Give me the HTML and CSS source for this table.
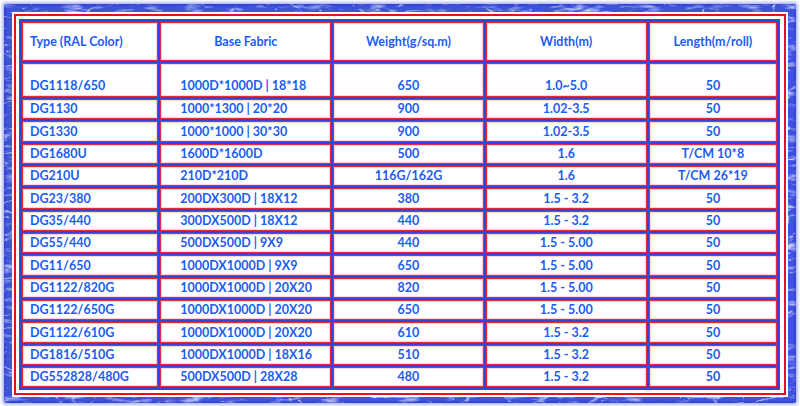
FILE: index.html
```html
<!DOCTYPE html>
<html>
<head>
<meta charset="utf-8">
<link rel="stylesheet" href="styles.css">
</head>
<body>
<div class="page">
  <div class="frame">
    <div class="paper">
      <div class="box">
        <table class="spec">
          <colgroup>
            <col class="c1"><col class="c2"><col class="c3"><col class="c4"><col class="c5">
          </colgroup>
          <thead>
            <tr class="head">
              <th class="left">Type (RAL Color)</th>
              <th>Base Fabric</th>
              <th>Weight(g/sq.m)</th>
              <th>Width(m)</th>
              <th>Length(m/roll)</th>
            </tr>
          </thead>
          <tbody>
            <tr class="first"><td class="left">DG1118/650</td><td class="fab">1000D*1000D | 18*18</td><td>650</td><td>1.0~5.0</td><td>50</td></tr>
            <tr><td class="left">DG1130</td><td class="fab">1000*1300 | 20*20</td><td>900</td><td>1.02-3.5</td><td>50</td></tr>
            <tr><td class="left">DG1330</td><td class="fab">1000*1000 | 30*30</td><td>900</td><td>1.02-3.5</td><td>50</td></tr>
            <tr><td class="left">DG1680U</td><td class="fab">1600D*1600D</td><td>500</td><td>1.6</td><td>T/CM 10*8</td></tr>
            <tr><td class="left">DG210U</td><td class="fab">210D*210D</td><td>116G/162G</td><td>1.6</td><td>T/CM 26*19</td></tr>
            <tr><td class="left">DG23/380</td><td class="fab">200DX300D | 18X12</td><td>380</td><td>1.5 - 3.2</td><td>50</td></tr>
            <tr><td class="left">DG35/440</td><td class="fab">300DX500D | 18X12</td><td>440</td><td>1.5 - 3.2</td><td>50</td></tr>
            <tr><td class="left">DG55/440</td><td class="fab">500DX500D | 9X9</td><td>440</td><td>1.5 - 5.00</td><td>50</td></tr>
            <tr><td class="left">DG11/650</td><td class="fab">1000DX1000D | 9X9</td><td>650</td><td>1.5 - 5.00</td><td>50</td></tr>
            <tr><td class="left">DG1122/820G</td><td class="fab">1000DX1000D | 20X20</td><td>820</td><td>1.5 - 5.00</td><td>50</td></tr>
            <tr><td class="left">DG1122/650G</td><td class="fab">1000DX1000D | 20X20</td><td>650</td><td>1.5 - 5.00</td><td>50</td></tr>
            <tr><td class="left">DG1122/610G</td><td class="fab">1000DX1000D | 20X20</td><td>610</td><td>1.5 - 3.2</td><td>50</td></tr>
            <tr><td class="left">DG1816/510G</td><td class="fab">1000DX1000D | 18X16</td><td>510</td><td>1.5 - 3.2</td><td>50</td></tr>
            <tr><td class="left">DG552828/480G</td><td class="fab">500DX500D | 28X28</td><td>480</td><td>1.5 - 3.2</td><td>50</td></tr>
          </tbody>
        </table>
      </div>
    </div>
  </div>
</div>
</body>
</html>
```
FILE: styles.css
```css
* { box-sizing: border-box; }
html, body { margin: 0; padding: 0; background: #ffffff; }
body { width: 800px; height: 406px; overflow: hidden; }

.page { padding: 4px 4px 3px 4px; }

.frame {
  padding: 8px 8px 6px 8px;
  background-color: #3f52dc;
  background-image:
    url("data:image/svg+xml,%3Csvg xmlns='http://www.w3.org/2000/svg' width='800' height='420'%3E%3Cfilter id='c' x='0' y='0' width='100%25' height='100%25'%3E%3CfeTurbulence type='turbulence' baseFrequency='0.035 0.08' numOctaves='2' seed='11'/%3E%3CfeColorMatrix values='0 0 0 0 0.85 0 0 0 0 0.88 0 0 0 0 1 -7 0 0 0 0.75'/%3E%3C/filter%3E%3Cfilter id='m' x='0' y='0' width='100%25' height='100%25'%3E%3CfeTurbulence type='fractalNoise' baseFrequency='0.05 0.2' numOctaves='3' seed='4'/%3E%3CfeColorMatrix values='0 0 0 0 0.75 0 0 0 0 0.8 0 0 0 0 1 2.2 0 0 0 -1.15'/%3E%3C/filter%3E%3Crect width='100%25' height='100%25' filter='url(%23m)'/%3E%3Crect width='100%25' height='100%25' filter='url(%23c)'/%3E%3C/svg%3E");
  box-shadow: 0 0 3px 2px rgba(100, 120, 235, 0.5), inset 0 0 2px 1px rgba(30, 40, 190, 0.55);
  border-radius: 2px;
}

.paper {
  background: #ffffff;
  padding: 2px;
}

.box {
  border: 2px solid #e3102b;
  padding: 3px;
  background: #ffffff;
}

.spec {
  width: 761px;
  table-layout: fixed;
  border-collapse: separate;
  border-spacing: 2px;
  border: 1px solid #e3102b;
  background: #2d46e0;
  font-family: "Lato", "Open Sans", sans-serif;
  font-weight: 700;
  font-size: 12.5px;
  color: #1c5cf2;
}

.c1 { width: 136px; }
.c2 { width: 171px; }
.c3 { width: 150px; }
.c4 { width: 161px; }
.c5 { width: 128px; }

.spec th, .spec td {
  background: #ffffff;
  border: 1px solid #e8283d;
  box-shadow: inset 0 0 0 1px #fbd3d8;
  padding: 0 4px;
  height: 20px;
  text-align: center;
  vertical-align: middle;
  line-height: 14px;
  white-space: nowrap;
  font-weight: 700;
}

.spec tbody tr:nth-child(3n) td { height: 21px; }
.spec .head th { height: 39px; }
.spec .first td { height: 34px; vertical-align: bottom; padding-bottom: 3px; }

.spec .left { text-align: left; padding-left: 7px; }
.spec td.fab { text-align: left; padding-left: 19px; }
```
